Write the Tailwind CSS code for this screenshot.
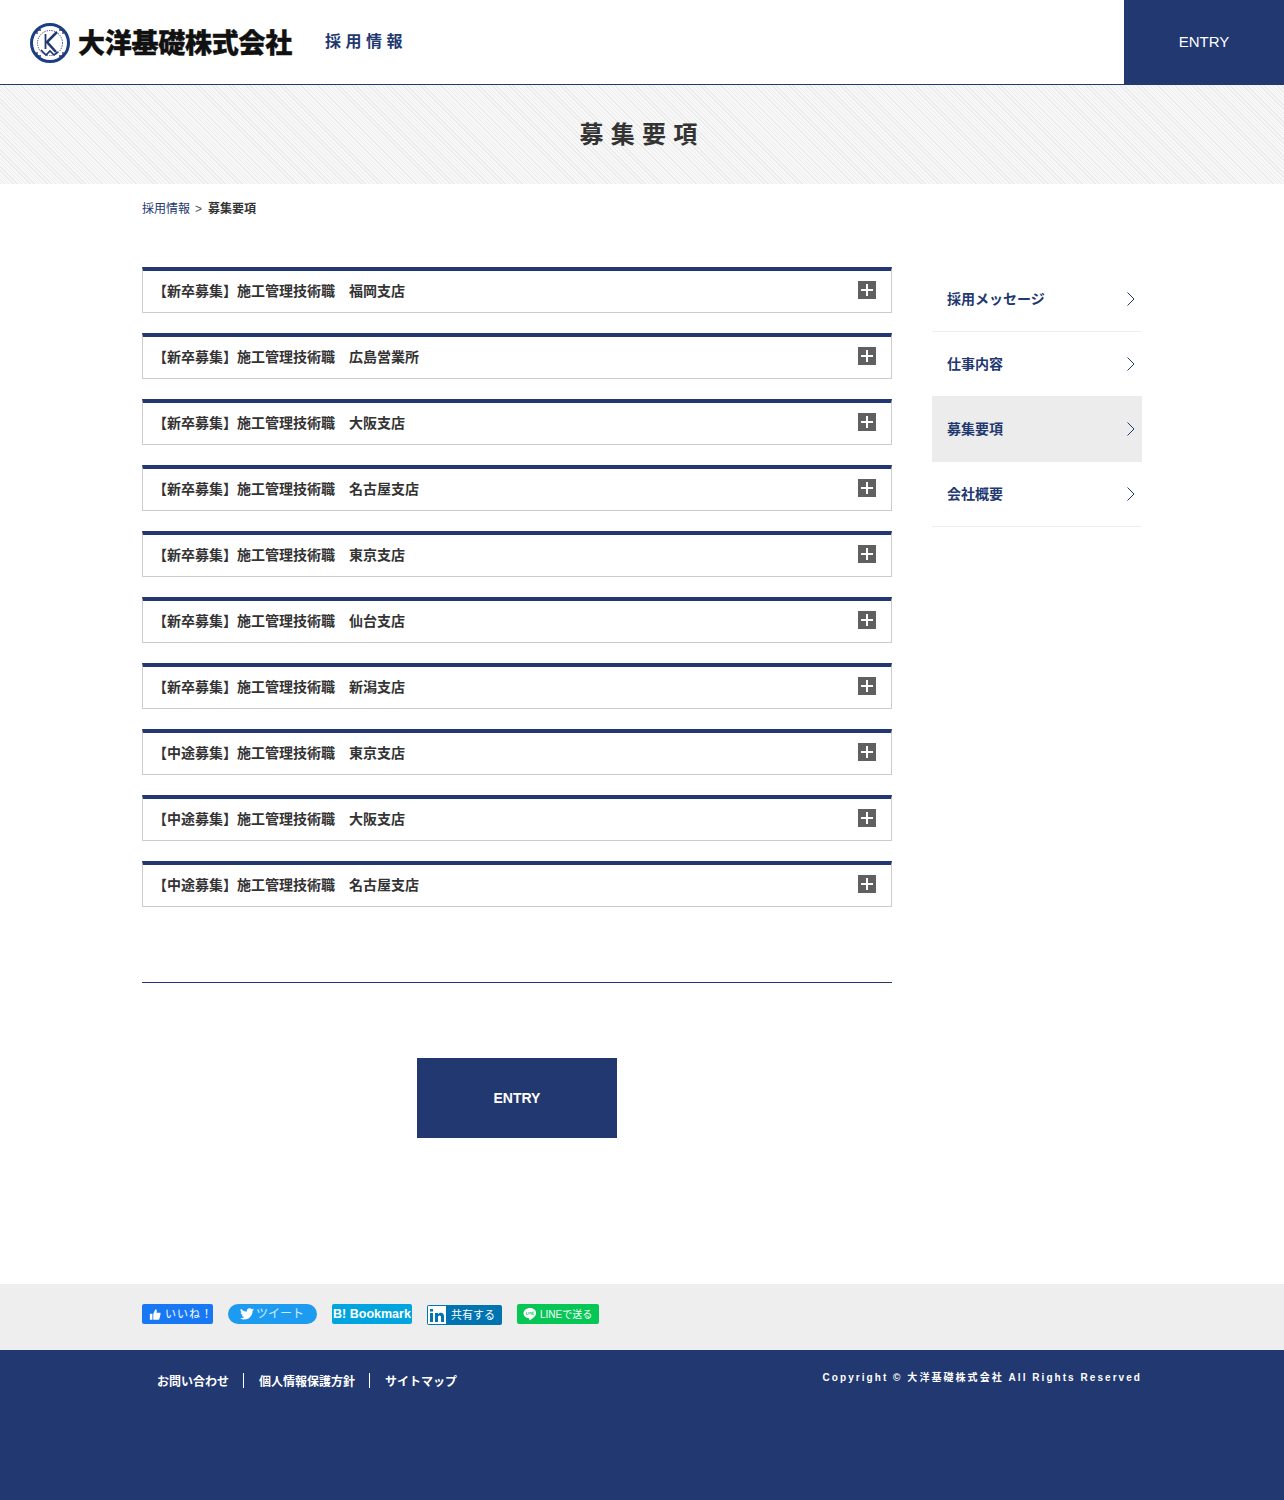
<!DOCTYPE html>
<html lang="ja">
<head>
  <meta charset="UTF-8">
  <title>募集要項 | 採用情報</title>
  <script src="https://cdn.jsdelivr.net/npm/@tailwindcss/browser@4"></script>
</head>
<body class="bg-white text-[#333] font-['Liberation_Sans','Noto_Sans_CJK_JP',sans-serif]">
  <!-- Header -->
  <header class="flex h-[85px] items-stretch justify-between border-b border-[#223870]">
    <div class="flex items-center pl-[30px]">
      <svg width="40" height="40" viewBox="0 0 40 40" class="mt-[2px]" fill="none">
        <circle cx="20" cy="20" r="18.5" stroke="#1a3f85" stroke-width="3"/>
        <circle cx="20" cy="20" r="12.500" stroke="#223870" stroke-width="1" stroke-dasharray="1.2 1.2"/>
        <path d="M7 11V7h4M33 11V7h-4M7 29v4h4M33 29v4h-4" stroke="#223870" stroke-width="1.3"/>
        <path d="M15.500 11v15" stroke="#223870" stroke-width="1.800"/>
        <path d="M27 9 17 19l9 10" stroke="#223870" stroke-width="2.600"/>
        <path d="M11 27l5 5 4-4 4 4 4-3" stroke="#223870" stroke-width="1.600"/>
      </svg>
      <span class="mb-[1px] ml-[8px] text-[27px] leading-none font-black tracking-[-0.25px] text-[#111] [-webkit-text-stroke:0.4px_#111] font-['Noto_Sans_CJK_JP',sans-serif]">大洋基礎株式会社</span>
      <span class="ml-[33px] text-base font-bold tracking-[4.5px] text-[#223870]">採用情報</span>
    </div>
    <a class="flex w-[160px] items-center justify-center bg-[#223870] pt-[1px] text-[15px] text-white">ENTRY</a>
  </header>

  <!-- Page title -->
  <div class="flex h-[99px] items-center justify-center bg-[#f3f3f3] bg-[repeating-linear-gradient(45deg,#ebebeb_0,#ebebeb_1px,#f8f8f8_1px,#f8f8f8_3px)]">
    <h1 class="text-2xl font-bold tracking-[7.2px] text-[#333]">募集要項</h1>
  </div>

  <!-- Breadcrumb -->
  <div class="mx-auto flex h-[49px] w-[1000px] items-center text-xs">
    <a class="text-[#223870]">採用情報</a>
    <span class="ml-[5px] mr-[6px] text-[#555]">&gt;</span>
    <strong class="font-bold">募集要項</strong>
  </div>

  <main class="mx-auto mt-[34px] flex w-[1000px] items-start justify-between">
    <div class="w-[750px]">
      <ul class="flex flex-col gap-5">
        <li class="flex h-[46px] items-center justify-between border border-t-4 border-[#ccc] border-t-[#223870] pl-[10px] pr-[15px] text-sm font-bold"><span class="pb-[2px]">【新卒募集】施工管理技術職　福岡支店</span><span class="relative mb-[3px] h-[18px] w-[18px] bg-[#606060] before:absolute before:left-[3px] before:top-[8px] before:h-[2px] before:w-[12px] before:bg-white after:absolute after:left-[8px] after:top-[3px] after:h-[12px] after:w-[2px] after:bg-white"></span></li>
        <li class="flex h-[46px] items-center justify-between border border-t-4 border-[#ccc] border-t-[#223870] pl-[10px] pr-[15px] text-sm font-bold"><span class="pb-[2px]">【新卒募集】施工管理技術職　広島営業所</span><span class="relative mb-[3px] h-[18px] w-[18px] bg-[#606060] before:absolute before:left-[3px] before:top-[8px] before:h-[2px] before:w-[12px] before:bg-white after:absolute after:left-[8px] after:top-[3px] after:h-[12px] after:w-[2px] after:bg-white"></span></li>
        <li class="flex h-[46px] items-center justify-between border border-t-4 border-[#ccc] border-t-[#223870] pl-[10px] pr-[15px] text-sm font-bold"><span class="pb-[2px]">【新卒募集】施工管理技術職　大阪支店</span><span class="relative mb-[3px] h-[18px] w-[18px] bg-[#606060] before:absolute before:left-[3px] before:top-[8px] before:h-[2px] before:w-[12px] before:bg-white after:absolute after:left-[8px] after:top-[3px] after:h-[12px] after:w-[2px] after:bg-white"></span></li>
        <li class="flex h-[46px] items-center justify-between border border-t-4 border-[#ccc] border-t-[#223870] pl-[10px] pr-[15px] text-sm font-bold"><span class="pb-[2px]">【新卒募集】施工管理技術職　名古屋支店</span><span class="relative mb-[3px] h-[18px] w-[18px] bg-[#606060] before:absolute before:left-[3px] before:top-[8px] before:h-[2px] before:w-[12px] before:bg-white after:absolute after:left-[8px] after:top-[3px] after:h-[12px] after:w-[2px] after:bg-white"></span></li>
        <li class="flex h-[46px] items-center justify-between border border-t-4 border-[#ccc] border-t-[#223870] pl-[10px] pr-[15px] text-sm font-bold"><span class="pb-[2px]">【新卒募集】施工管理技術職　東京支店</span><span class="relative mb-[3px] h-[18px] w-[18px] bg-[#606060] before:absolute before:left-[3px] before:top-[8px] before:h-[2px] before:w-[12px] before:bg-white after:absolute after:left-[8px] after:top-[3px] after:h-[12px] after:w-[2px] after:bg-white"></span></li>
        <li class="flex h-[46px] items-center justify-between border border-t-4 border-[#ccc] border-t-[#223870] pl-[10px] pr-[15px] text-sm font-bold"><span class="pb-[2px]">【新卒募集】施工管理技術職　仙台支店</span><span class="relative mb-[3px] h-[18px] w-[18px] bg-[#606060] before:absolute before:left-[3px] before:top-[8px] before:h-[2px] before:w-[12px] before:bg-white after:absolute after:left-[8px] after:top-[3px] after:h-[12px] after:w-[2px] after:bg-white"></span></li>
        <li class="flex h-[46px] items-center justify-between border border-t-4 border-[#ccc] border-t-[#223870] pl-[10px] pr-[15px] text-sm font-bold"><span class="pb-[2px]">【新卒募集】施工管理技術職　新潟支店</span><span class="relative mb-[3px] h-[18px] w-[18px] bg-[#606060] before:absolute before:left-[3px] before:top-[8px] before:h-[2px] before:w-[12px] before:bg-white after:absolute after:left-[8px] after:top-[3px] after:h-[12px] after:w-[2px] after:bg-white"></span></li>
        <li class="flex h-[46px] items-center justify-between border border-t-4 border-[#ccc] border-t-[#223870] pl-[10px] pr-[15px] text-sm font-bold"><span class="pb-[2px]">【中途募集】施工管理技術職　東京支店</span><span class="relative mb-[3px] h-[18px] w-[18px] bg-[#606060] before:absolute before:left-[3px] before:top-[8px] before:h-[2px] before:w-[12px] before:bg-white after:absolute after:left-[8px] after:top-[3px] after:h-[12px] after:w-[2px] after:bg-white"></span></li>
        <li class="flex h-[46px] items-center justify-between border border-t-4 border-[#ccc] border-t-[#223870] pl-[10px] pr-[15px] text-sm font-bold"><span class="pb-[2px]">【中途募集】施工管理技術職　大阪支店</span><span class="relative mb-[3px] h-[18px] w-[18px] bg-[#606060] before:absolute before:left-[3px] before:top-[8px] before:h-[2px] before:w-[12px] before:bg-white after:absolute after:left-[8px] after:top-[3px] after:h-[12px] after:w-[2px] after:bg-white"></span></li>
        <li class="flex h-[46px] items-center justify-between border border-t-4 border-[#ccc] border-t-[#223870] pl-[10px] pr-[15px] text-sm font-bold"><span class="pb-[2px]">【中途募集】施工管理技術職　名古屋支店</span><span class="relative mb-[3px] h-[18px] w-[18px] bg-[#606060] before:absolute before:left-[3px] before:top-[8px] before:h-[2px] before:w-[12px] before:bg-white after:absolute after:left-[8px] after:top-[3px] after:h-[12px] after:w-[2px] after:bg-white"></span></li>
      </ul>
      <div class="mt-[75px] border-t border-[#223870]"></div>
      <a class="mx-auto mt-[75px] flex h-20 w-[200px] items-center justify-center bg-[#223870] text-sm font-bold text-white">ENTRY</a>
    </div>

    <!-- Side nav -->
    <nav class="w-[210px] text-sm font-bold text-[#223870]">
      <a class="flex h-[65px] items-center justify-between border-b border-[#eee] pl-[15px] pr-[6px]">採用メッセージ
        <svg width="10" height="16" viewBox="0 0 10 16" fill="none" stroke="#223870"><path d="M1.5 1.5 8 8l-6.5 6.5"/></svg></a>
      <a class="flex h-16 items-center justify-between pl-[15px] pr-[6px]">仕事内容
        <svg width="10" height="16" viewBox="0 0 10 16" fill="none" stroke="#223870"><path d="M1.5 1.5 8 8l-6.5 6.5"/></svg></a>
      <a class="flex h-[66px] items-center justify-between bg-[#ececec] pl-[15px] pr-[6px]">募集要項
        <svg width="10" height="16" viewBox="0 0 10 16" fill="none" stroke="#223870"><path d="M1.5 1.5 8 8l-6.5 6.5"/></svg></a>
      <a class="flex h-[65px] items-center justify-between border-b border-[#eee] pl-[15px] pr-[6px]">会社概要
        <svg width="10" height="16" viewBox="0 0 10 16" fill="none" stroke="#223870"><path d="M1.5 1.5 8 8l-6.5 6.5"/></svg></a>
    </nav>
  </main>

  <!-- Share buttons -->
  <div class="mt-[146px] h-[66px] bg-[#eee]">
    <div class="mx-auto flex w-[1000px] items-start gap-[15px] pt-5 whitespace-nowrap">
      <a class="flex h-5 w-[71px] items-center gap-[4px] rounded-[2px] bg-[#1877f2] pl-[7px] text-[11px] tracking-[1px] text-white">
        <svg width="15" height="15" viewBox="0 0 14 14" fill="#fff"><path d="M1 6h3v7H1zM5 6l2.5-5c1.2 0 1.8.9 1.6 2L8.700 5H12.500c.8 0 1.200.7 1 1.400l-1.400 5.800c-.2.500-.5.800-1.100.8H5z"/></svg>
        いいね！</a>
      <a class="flex h-5 w-[89px] items-center gap-[2px] rounded-full bg-[#1d9bf0] pl-[12px] text-xs text-white/80">
        <svg width="14" height="12" viewBox="0 0 24 20" fill="#fff"><path d="M24 2.400a9.800 9.800 0 0 1-2.800.8A4.900 4.900 0 0 0 23.300.5a9.800 9.800 0 0 1-3.100 1.200 4.900 4.900 0 0 0-8.400 4.500A14 14 0 0 1 1.700.9a4.900 4.900 0 0 0 1.500 6.600 4.900 4.900 0 0 1-2.200-.6 4.900 4.900 0 0 0 3.900 4.900 4.900 4.900 0 0 1-2.200.1 4.900 4.900 0 0 0 4.600 3.400A9.900 9.900 0 0 1 0 17.300 14 14 0 0 0 7.500 19.500c9.100 0 14.300-7.700 14-14.600A10 10 0 0 0 24 2.400z"/></svg>
        ツイート</a>
      <a class="flex h-5 w-20 items-center justify-center rounded-[2px] bg-[#00a4de] text-[12.5px] font-bold leading-none text-white">B! Bookmark</a>
      <a class="mt-[1px] flex h-5 w-[75px] items-center rounded-[2px] bg-[#0073b1] text-[11px] text-white">
        <span class="ml-[1px] flex h-[18px] w-[18px] items-center justify-center bg-white">
          <svg width="14" height="14" viewBox="0 0 14 14" fill="#0073b1"><path d="M0 5h3v9H0zM0 1h3v2.500H0zM5 5h3v1.300C8.600 5.400 9.500 4.800 10.800 4.800c2.300 0 3.200 1.500 3.200 3.800V14h-3V9.200c0-1.100-.4-1.800-1.400-1.800S8 8.100 8 9.200V14H5z"/></svg>
        </span>
        <span class="ml-[5px]">共有する</span></a>
      <a class="flex h-5 w-[82px] items-center gap-[3px] rounded-[2px] bg-[#06c755] pl-[6px] text-[10px] text-white">
        <svg width="14" height="14" viewBox="0 0 14 14" fill="#fff"><path d="M7 1C3.400 1 .5 3.300.5 6.200c0 2.600 2.300 4.700 5.400 5.100.5.100.4.500.3 1.700 0 .3.200.4.500.2 2.500-1.500 6.300-3.900 6.300-7C13.500 3.300 10.600 1 7 1z"/><path d="M3.500 5v2.500h1.300M5.800 5v2.500M7 7.500V5l1.800 2.500V5M10.800 5H9.700v2.500h1.100M9.700 6.200h1" stroke="#06c755" stroke-width=".6" fill="none"/></svg>
        LINEで送る</a>
    </div>
  </div>

  <!-- Footer -->
  <footer class="h-[150px] bg-[#223870] text-white">
    <div class="mx-auto flex w-[1000px] items-start justify-between pt-[23px]">
      <ul class="flex text-xs font-bold">
        <li class="h-[15px] border-r border-white pl-[15px] pr-[14px] leading-[18px]">お問い合わせ</li>
        <li class="h-[15px] border-r border-white pl-[15px] pr-[14px] leading-[18px]">個人情報保護方針</li>
        <li class="h-[15px] px-[15px] leading-[18px]">サイトマップ</li>
      </ul>
      <p class="text-[10px] font-bold leading-[10px] tracking-[2.05px]">Copyright © 大洋基礎株式会社 All Rights Reserved</p>
    </div>
  </footer>
</body>
</html>
